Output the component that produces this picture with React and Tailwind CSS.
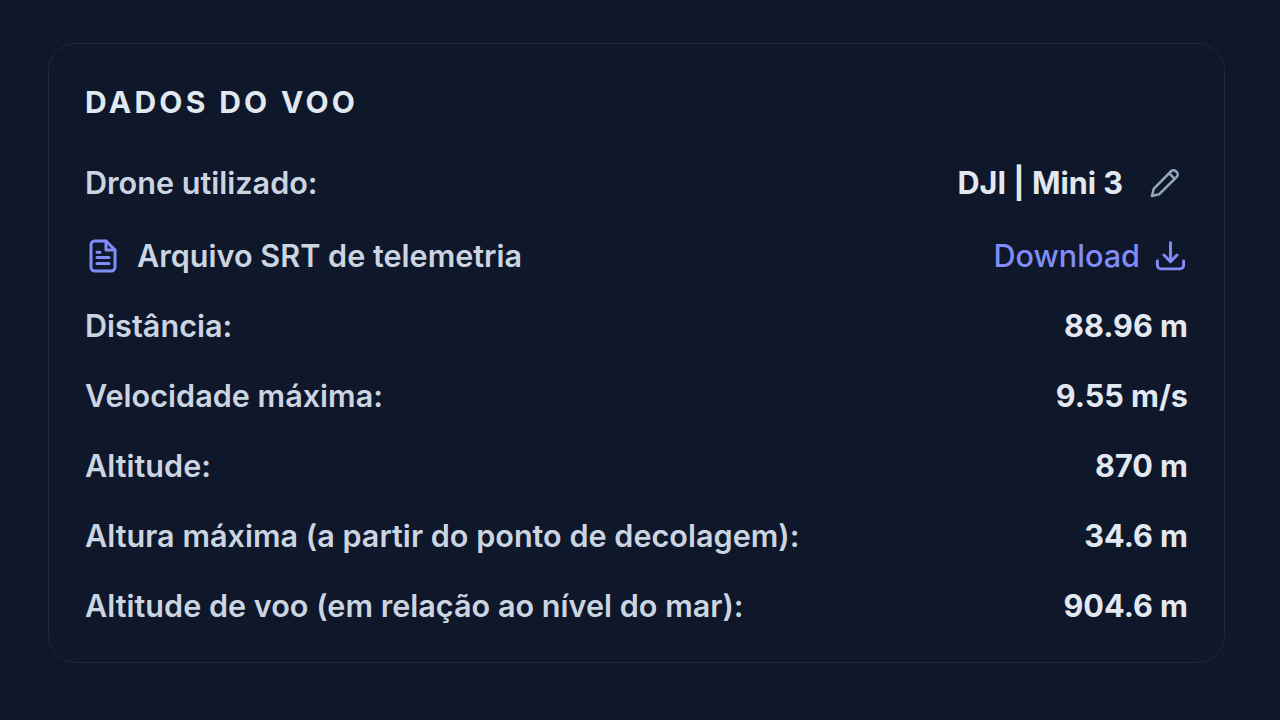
const linhas = [
  ['Distância:', '88.96 m'],
  ['Velocidade máxima:', '9.55 m/s'],
  ['Altitude:', '870 m'],
  ['Altura máxima (a partir do ponto de decolagem):', '34.6 m'],
  ['Altitude de voo (em relação ao nível do mar):', '904.6 m'],
]

function IconeLapis() {
  return (
    <svg viewBox="0 0 24 24" fill="none" stroke="currentColor" strokeWidth="1.8" strokeLinecap="round" strokeLinejoin="round" className="ml-[25px] mr-[6px] h-[34px] w-[34px] text-[#94a3b8]">
      <path d="M2.800 21.200l1.200-5L16.300 3.700a2.400 2.400 0 0 1 3.400 0l.6.600a2.400 2.400 0 0 1 0 3.400L7.800 20z" />
      <path d="M15 5.200l3.800 3.800" />
    </svg>
  )
}

function IconeArquivo() {
  return (
    <svg viewBox="0 0 24 24" fill="none" stroke="currentColor" strokeWidth="2" strokeLinecap="round" strokeLinejoin="round" className="h-[36px] w-[36px] text-[#818cf8]">
      <path d="M14 2H6.500A2.500 2.500 0 0 0 4 4.500v15A2.500 2.500 0 0 0 6.500 22h11a2.500 2.500 0 0 0 2.500-2.500V8z" />
      <path d="M14 2v6h6" />
      <path d="M8 9.500h2M8 13h8M8 17h8" />
    </svg>
  )
}

function IconeDownload() {
  return (
    <svg viewBox="0 0 24 24" fill="none" stroke="currentColor" strokeWidth="2" strokeLinecap="round" strokeLinejoin="round" className="ml-[13px] h-[35px] w-[35px]">
      <path d="M3 15v3A2.500 2.500 0 0 0 5.500 20.500h13a2.500 2.500 0 0 0 2.500-2.500v-3" />
      <path d="M7.500 11L12 15.500l4.500-4.500" />
      <path d="M12 15.500V2.500" />
    </svg>
  )
}

export default function App() {
  return (
    <div className="h-[720px] overflow-hidden bg-[#0f172a] pt-[43px] pl-[48px] pr-[55px] font-['Inter',sans-serif]">
      <div className="h-[620px] rounded-[28px] border border-[#1e293b] pt-[41px] pl-[36px] pr-[36px]">
        <h2 className="text-[30px] leading-[34px] font-bold tracking-[3.3px] text-[#e2e8f0]">DADOS DO VOO</h2>
        <div className="mt-[47px] flex h-[34px] items-center justify-between text-[30.6px] font-semibold">
          <span className="text-[#cbd5e1]">Drone utilizado:</span>
          <div className="flex items-center font-bold text-[#e2e8f0]">
            <span>DJI | Mini 3</span>
            <IconeLapis />
          </div>
        </div>
        <div className="mt-[39px] flex h-[34px] items-center justify-between text-[30.6px] font-semibold">
          <div className="flex items-center text-[#cbd5e1]">
            <IconeArquivo />
            <span className="ml-[16px]">Arquivo SRT de telemetria</span>
          </div>
          <div className="flex items-center text-[#818cf8] font-medium">
            <span>Download</span>
            <IconeDownload />
          </div>
        </div>
        <div className="mt-[36px] flex flex-col gap-[36px]">
          {linhas.map(([rotulo, valor]) => (
            <div key={rotulo} className="flex h-[34px] items-center justify-between text-[30.6px] font-semibold">
              <span className="text-[#cbd5e1]">{rotulo}</span>
              <span className="font-bold text-[#e2e8f0]">{valor}</span>
            </div>
          ))}
        </div>
      </div>
    </div>
  )
}
